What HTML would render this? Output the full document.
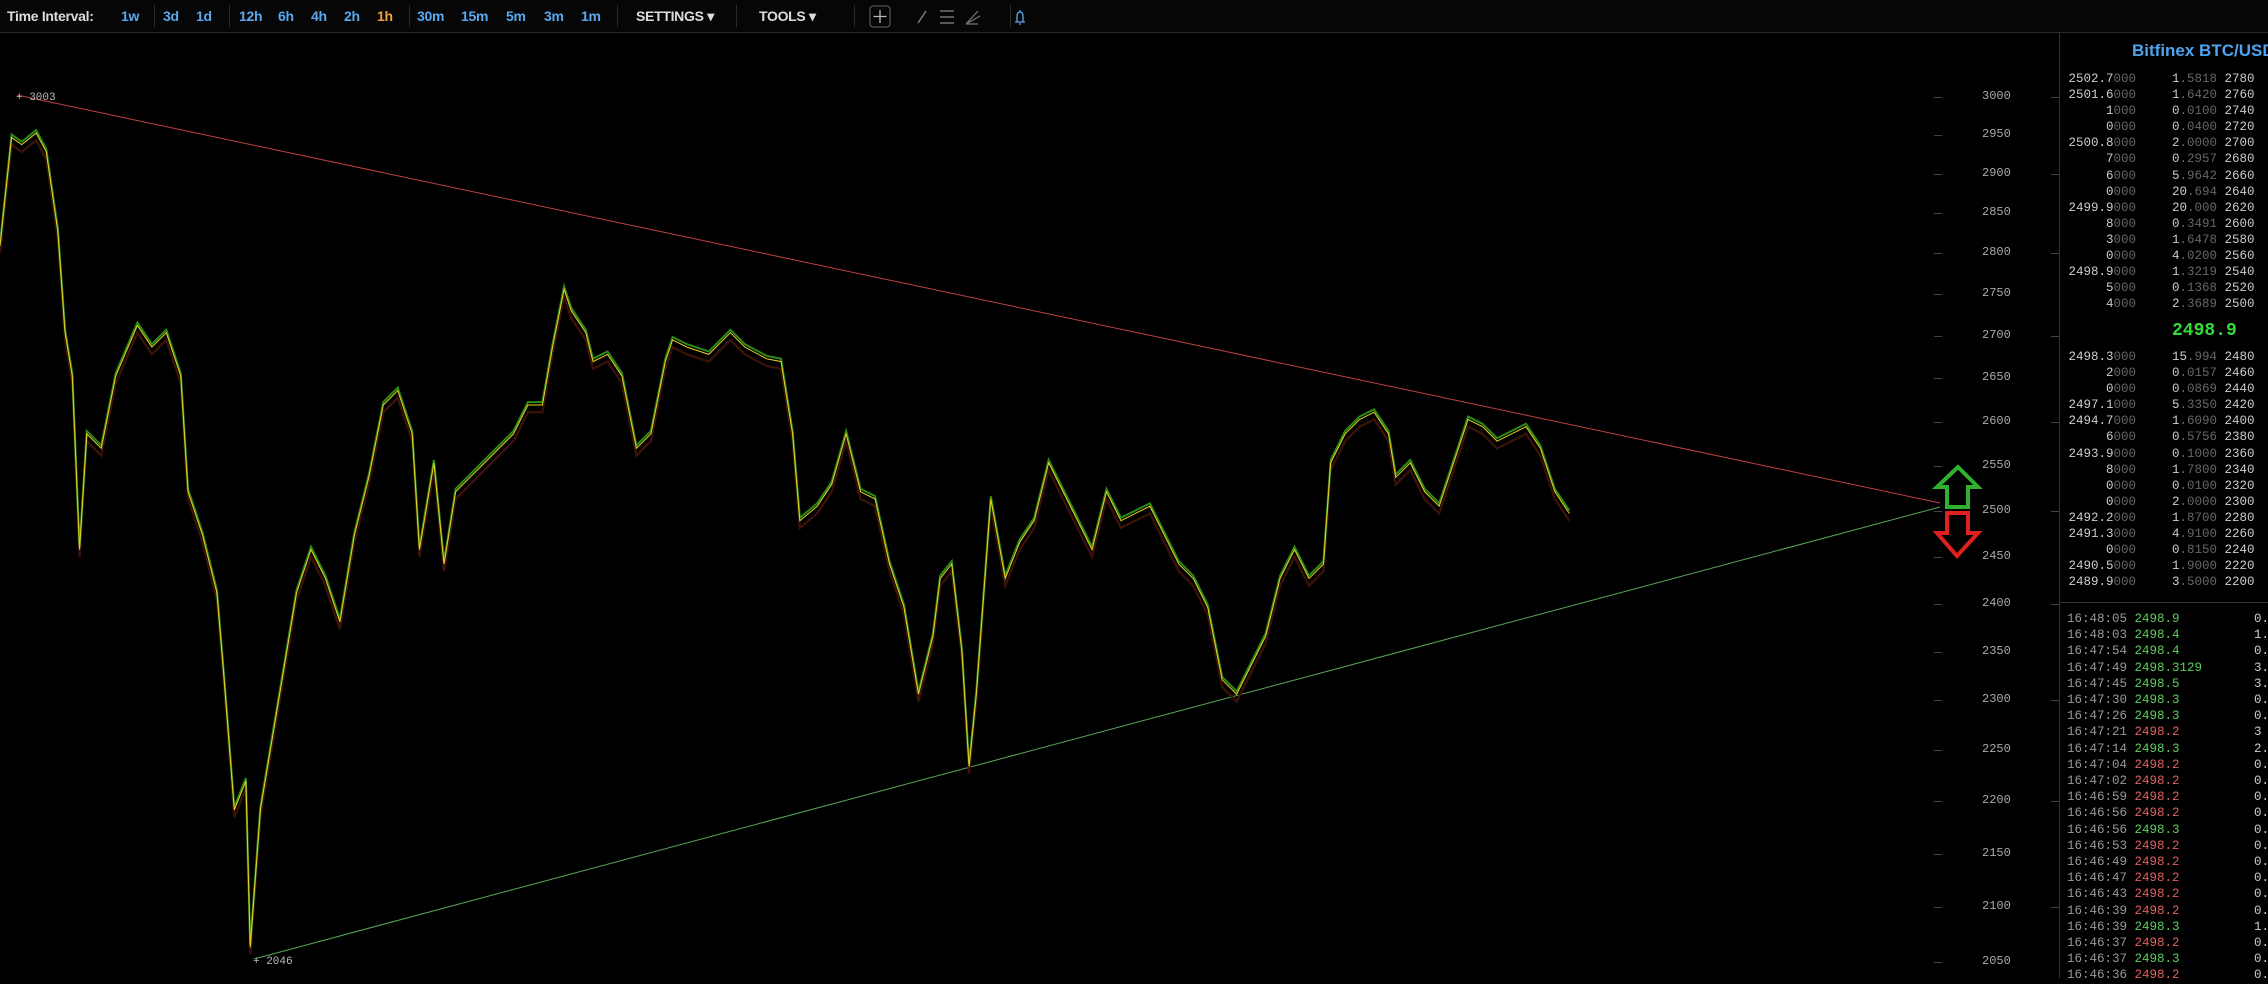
<!DOCTYPE html>
<html><head><meta charset="utf-8">
<style>
*{margin:0;padding:0;box-sizing:border-box}
body{width:2268px;height:978px;background:#000;overflow:hidden;position:relative;font-family:"Liberation Sans",sans-serif}
#bar{position:absolute;left:0;top:0;width:2268px;height:33px;background:#060606;border-bottom:1px solid #2a2a2a}
#bar span{position:absolute;top:8px;font-size:14px;font-weight:bold;color:#5aa8f0;letter-spacing:-0.3px}
#bar .w{color:#ddd}
#bar .o{color:#f0a040}
#bar .sep{position:absolute;top:5px;width:1px;height:22px;background:#2a2a2a}
.ax{position:absolute;left:1982px;font:12px "Liberation Mono",monospace;color:#aaa}
.tk{position:absolute;width:8px;height:1px;background:#444}
#panel{position:absolute;left:2059px;top:33px;width:209px;height:945px;border-left:1px solid #333}
.ob,.tr{position:absolute;font:12.5px "Liberation Mono",monospace;white-space:pre;color:#ccc}
.d{color:#666}
.g{color:#5fce5f}.r{color:#e06060}.t{color:#999}
</style></head><body>
<div id="bar">
<span class="w" style="left:7px">Time Interval:</span>
<div class="sep" style="left:154px"></div><div class="sep" style="left:229px"></div><div class="sep" style="left:409px"></div><div class="sep" style="left:617px"></div><div class="sep" style="left:736px"></div><div class="sep" style="left:854px"></div><div class="sep" style="left:1010px"></div>
<span style="left:121px">1w</span><span style="left:163px">3d</span><span style="left:196px">1d</span>
<span style="left:239px">12h</span><span style="left:278px">6h</span><span style="left:311px">4h</span><span style="left:344px">2h</span><span class="o" style="left:377px">1h</span>
<span style="left:417px">30m</span><span style="left:461px">15m</span><span style="left:506px">5m</span><span style="left:544px">3m</span><span style="left:581px">1m</span>
<span class="w" style="left:636px">SETTINGS ▾</span><span class="w" style="left:759px">TOOLS ▾</span>
<svg style="position:absolute;left:868px;top:5px" width="160" height="24" viewBox="0 0 160 24">
<rect x="2" y="1" width="20" height="21" rx="3" fill="none" stroke="#666"/><path d="M12 5v13M5.5 11.5h13" stroke="#bbb" stroke-width="1.3"/>
<path d="M50 18L58 6" stroke="#888" stroke-width="1.3"/>
<path d="M72 6h14M72 12h14M72 18h14" stroke="#888" stroke-width="1.3"/>
<path d="M98 19L110 6M98 19L112 11M98 19h12" stroke="#777" stroke-width="1.2"/>
<path d="M157 17h-10M149 17v-5c0-3 1-5 3-5s3 2 3 5v5M152 5v2M151 19h2" stroke="#5aa8f0" stroke-width="1.3" fill="none"/>
</svg>
</div>

<svg style="position:absolute;left:0;top:0" width="2268" height="978">
<line x1="17" y1="95" x2="1940" y2="503" stroke="#c04040" stroke-width="1"/>
<line x1="254" y1="959" x2="1940" y2="507" stroke="#58a858" stroke-width="1"/>
<g transform="scale(1.4464)">
<polyline fill="none" stroke="#3a1208" stroke-width="1.6" transform="translate(0,5)" points="0,170 8,95 15,100 25,92 32,105 40,160 45,230 50,260 55,380 60,300 70,310 80,260 95,225 105,240 115,230 125,260 130,340 140,370 150,410 155,470 162,560 170,540 173,655 180,560 185,530 195,470 205,410 215,380 225,400 235,430 245,370 255,330 265,280 275,270 285,300 290,380 300,320 307,390 315,340 325,330 335,320 345,310 355,300 365,280 375,280 382,240 390,200 395,215 405,230 410,250 420,245 430,260 440,310 450,300 460,250 465,235 475,240 490,245 505,230 515,240 530,248 540,250 548,300 553,360 565,350 575,335 585,300 595,340 605,345 615,390 625,420 635,480 645,440 650,400 658,390 665,450 670,530 675,480 685,345 695,400 705,375 715,360 725,320 735,340 745,360 755,380 765,340 775,360 785,355 795,350 805,370 815,390 825,400 835,420 845,470 855,480 865,460 875,440 885,400 895,380 905,400 915,390 920,320 930,300 940,290 950,285 960,300 965,330 975,320 985,340 995,350 1005,320 1015,290 1025,295 1035,305 1045,300 1055,295 1065,310 1075,340 1085,355"/>
<polyline fill="none" stroke="#2c8a18" stroke-width="1.4" transform="translate(0,-2)" points="0,170 8,95 15,100 25,92 32,105 40,160 45,230 50,260 55,380 60,300 70,310 80,260 95,225 105,240 115,230 125,260 130,340 140,370 150,410 155,470 162,560 170,540 173,655 180,560 185,530 195,470 205,410 215,380 225,400 235,430 245,370 255,330 265,280 275,270 285,300 290,380 300,320 307,390 315,340 325,330 335,320 345,310 355,300 365,280 375,280 382,240 390,200 395,215 405,230 410,250 420,245 430,260 440,310 450,300 460,250 465,235 475,240 490,245 505,230 515,240 530,248 540,250 548,300 553,360 565,350 575,335 585,300 595,340 605,345 615,390 625,420 635,480 645,440 650,400 658,390 665,450 670,530 675,480 685,345 695,400 705,375 715,360 725,320 735,340 745,360 755,380 765,340 775,360 785,355 795,350 805,370 815,390 825,400 835,420 845,470 855,480 865,460 875,440 885,400 895,380 905,400 915,390 920,320 930,300 940,290 950,285 960,300 965,330 975,320 985,340 995,350 1005,320 1015,290 1025,295 1035,305 1045,300 1055,295 1065,310 1075,340 1085,355"/>
<polyline fill="none" stroke="#e8d020" stroke-width="0.7" points="0,170 8,95 15,100 25,92 32,105 40,160 45,230 50,260 55,380 60,300 70,310 80,260 95,225 105,240 115,230 125,260 130,340 140,370 150,410 155,470 162,560 170,540 173,655 180,560 185,530 195,470 205,410 215,380 225,400 235,430 245,370 255,330 265,280 275,270 285,300 290,380 300,320 307,390 315,340 325,330 335,320 345,310 355,300 365,280 375,280 382,240 390,200 395,215 405,230 410,250 420,245 430,260 440,310 450,300 460,250 465,235 475,240 490,245 505,230 515,240 530,248 540,250 548,300 553,360 565,350 575,335 585,300 595,340 605,345 615,390 625,420 635,480 645,440 650,400 658,390 665,450 670,530 675,480 685,345 695,400 705,375 715,360 725,320 735,340 745,360 755,380 765,340 775,360 785,355 795,350 805,370 815,390 825,400 835,420 845,470 855,480 865,460 875,440 885,400 895,380 905,400 915,390 920,320 930,300 940,290 950,285 960,300 965,330 975,320 985,340 995,350 1005,320 1015,290 1025,295 1035,305 1045,300 1055,295 1065,310 1075,340 1085,355"/>
</g>
<path d="M1958 467L1937 487H1947V507H1968V487H1978Z" fill="none" stroke="#2fb02f" stroke-width="4" stroke-linejoin="miter"/>
<path d="M1947 513V533H1937L1957 556L1978 533H1968V513Z" fill="none" stroke="#e02020" stroke-width="4"/>
<text x="16" y="100" fill="#bbb" font-family="Liberation Mono" font-size="11">+ 3003</text>
<text x="253" y="964" fill="#bbb" font-family="Liberation Mono" font-size="11">+ 2046</text>
</svg>

<div class="ax" style="top:89px">3000</div><div class="ax" style="top:127px">2950</div><div class="ax" style="top:166px">2900</div><div class="ax" style="top:205px">2850</div><div class="ax" style="top:245px">2800</div><div class="ax" style="top:286px">2750</div><div class="ax" style="top:328px">2700</div><div class="ax" style="top:370px">2650</div><div class="ax" style="top:414px">2600</div><div class="ax" style="top:458px">2550</div><div class="ax" style="top:503px">2500</div><div class="ax" style="top:549px">2450</div><div class="ax" style="top:596px">2400</div><div class="ax" style="top:644px">2350</div><div class="ax" style="top:692px">2300</div><div class="ax" style="top:742px">2250</div><div class="ax" style="top:793px">2200</div><div class="ax" style="top:846px">2150</div><div class="ax" style="top:899px">2100</div><div class="ax" style="top:954px">2050</div>
<div class="tk" style="left:1934px;top:97px"></div><div class="tk" style="left:1934px;top:135px"></div><div class="tk" style="left:1934px;top:174px"></div><div class="tk" style="left:1934px;top:213px"></div><div class="tk" style="left:1934px;top:253px"></div><div class="tk" style="left:1934px;top:294px"></div><div class="tk" style="left:1934px;top:336px"></div><div class="tk" style="left:1934px;top:378px"></div><div class="tk" style="left:1934px;top:422px"></div><div class="tk" style="left:1934px;top:466px"></div><div class="tk" style="left:1934px;top:511px"></div><div class="tk" style="left:1934px;top:557px"></div><div class="tk" style="left:1934px;top:604px"></div><div class="tk" style="left:1934px;top:652px"></div><div class="tk" style="left:1934px;top:700px"></div><div class="tk" style="left:1934px;top:750px"></div><div class="tk" style="left:1934px;top:801px"></div><div class="tk" style="left:1934px;top:854px"></div><div class="tk" style="left:1934px;top:907px"></div><div class="tk" style="left:1934px;top:962px"></div>
<div class="tk" style="left:2051px;top:97px"></div><div class="tk" style="left:2051px;top:174px"></div><div class="tk" style="left:2051px;top:253px"></div><div class="tk" style="left:2051px;top:336px"></div><div class="tk" style="left:2051px;top:422px"></div><div class="tk" style="left:2051px;top:511px"></div><div class="tk" style="left:2051px;top:604px"></div><div class="tk" style="left:2051px;top:700px"></div><div class="tk" style="left:2051px;top:801px"></div><div class="tk" style="left:2051px;top:907px"></div>

<div id="panel">
<div style="position:absolute;left:72px;top:8px;font-size:17px;font-weight:bold;color:#4da3f0;white-space:nowrap">Bitfinex BTC/USD</div>
<div style="position:absolute;left:0;top:569px;width:209px;height:1px;background:#333"></div>
</div>

<div class="ob" style="left:2066px;top:71px;line-height:16.1px;text-align:right;width:70px">2502.7<span class="d">000</span>
2501.6<span class="d">000</span>
1<span class="d">000</span>
0<span class="d">000</span>
2500.8<span class="d">000</span>
7<span class="d">000</span>
6<span class="d">000</span>
0<span class="d">000</span>
2499.9<span class="d">000</span>
8<span class="d">000</span>
3<span class="d">000</span>
0<span class="d">000</span>
2498.9<span class="d">000</span>
5<span class="d">000</span>
4<span class="d">000</span></div>
<div class="ob" style="left:2172px;top:71px;line-height:16.1px">1<span class="d">.5818</span> 2780
1<span class="d">.6420</span> 2760
0<span class="d">.0100</span> 2740
0<span class="d">.0400</span> 2720
2<span class="d">.0000</span> 2700
0<span class="d">.2957</span> 2680
5<span class="d">.9642</span> 2660
20<span class="d">.694</span> 2640
20<span class="d">.000</span> 2620
0<span class="d">.3491</span> 2600
1<span class="d">.6478</span> 2580
4<span class="d">.0200</span> 2560
1<span class="d">.3219</span> 2540
0<span class="d">.1368</span> 2520
2<span class="d">.3689</span> 2500</div>
<div style="position:absolute;left:2172px;top:321px;font:bold 18px 'Liberation Mono',monospace;color:#33dd33">2498.9</div>
<div class="ob" style="left:2066px;top:349px;line-height:16.1px;text-align:right;width:70px">2498.3<span class="d">000</span>
2<span class="d">000</span>
0<span class="d">000</span>
2497.1<span class="d">000</span>
2494.7<span class="d">000</span>
6<span class="d">000</span>
2493.9<span class="d">000</span>
8<span class="d">000</span>
0<span class="d">000</span>
0<span class="d">000</span>
2492.2<span class="d">000</span>
2491.3<span class="d">000</span>
0<span class="d">000</span>
2490.5<span class="d">000</span>
2489.9<span class="d">000</span></div>
<div class="ob" style="left:2172px;top:349px;line-height:16.1px">15<span class="d">.994</span> 2480
0<span class="d">.0157</span> 2460
0<span class="d">.0869</span> 2440
5<span class="d">.3350</span> 2420
1<span class="d">.6090</span> 2400
0<span class="d">.5756</span> 2380
0<span class="d">.1000</span> 2360
1<span class="d">.7800</span> 2340
0<span class="d">.0100</span> 2320
2<span class="d">.0000</span> 2300
1<span class="d">.8700</span> 2280
4<span class="d">.9100</span> 2260
0<span class="d">.8150</span> 2240
1<span class="d">.9000</span> 2220
3<span class="d">.5000</span> 2200</div>

<div class="tr" style="left:2067px;top:611px;line-height:16.2px"><span class="t">16:48:05</span> <span class="g">2498.9</span>
<span class="t">16:48:03</span> <span class="g">2498.4</span>
<span class="t">16:47:54</span> <span class="g">2498.4</span>
<span class="t">16:47:49</span> <span class="g">2498.3129</span>
<span class="t">16:47:45</span> <span class="g">2498.5</span>
<span class="t">16:47:30</span> <span class="g">2498.3</span>
<span class="t">16:47:26</span> <span class="g">2498.3</span>
<span class="t">16:47:21</span> <span class="r">2498.2</span>
<span class="t">16:47:14</span> <span class="g">2498.3</span>
<span class="t">16:47:04</span> <span class="r">2498.2</span>
<span class="t">16:47:02</span> <span class="r">2498.2</span>
<span class="t">16:46:59</span> <span class="r">2498.2</span>
<span class="t">16:46:56</span> <span class="r">2498.2</span>
<span class="t">16:46:56</span> <span class="g">2498.3</span>
<span class="t">16:46:53</span> <span class="r">2498.2</span>
<span class="t">16:46:49</span> <span class="r">2498.2</span>
<span class="t">16:46:47</span> <span class="r">2498.2</span>
<span class="t">16:46:43</span> <span class="r">2498.2</span>
<span class="t">16:46:39</span> <span class="r">2498.2</span>
<span class="t">16:46:39</span> <span class="g">2498.3</span>
<span class="t">16:46:37</span> <span class="r">2498.2</span>
<span class="t">16:46:37</span> <span class="g">2498.3</span>
<span class="t">16:46:36</span> <span class="r">2498.2</span></div>
<div class="tr" style="left:2254px;top:611px;line-height:16.2px">0.
1.
0.
3.
3.
0.
0.
3
2.
0.
0.
0.
0.
0.
0.
0.
0.
0.
0.
1.
0.
0.
0.</div>
</body></html>
